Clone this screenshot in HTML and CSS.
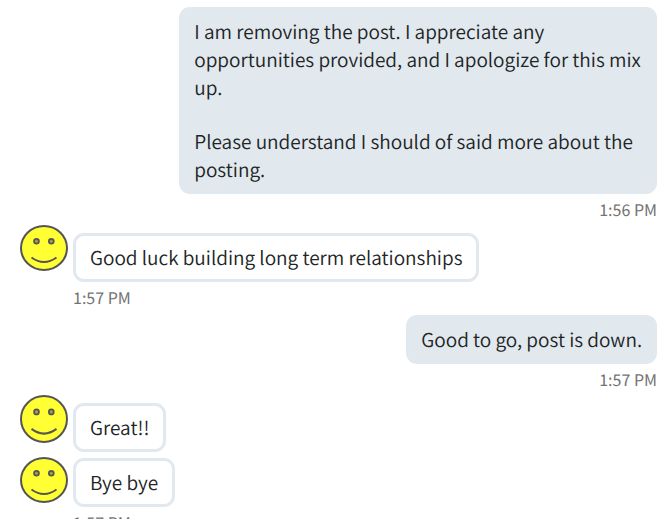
FILE: index.html
```html
<!DOCTYPE html>
<html lang="en">
<head>
    <meta charset="UTF-8">
    <meta name="viewport" content="width=device-width, initial-scale=1.0">
    <title>Messages</title>
    <link rel="stylesheet" href="styles.css">
</head>
<body>
    <svg class="sprite" aria-hidden="true">
        <symbol id="smiley" viewBox="0 0 48 46" preserveAspectRatio="none">
            <ellipse cx="24" cy="23" rx="23" ry="22" fill="#ffff33" stroke="#555" stroke-width="2"/>
            <circle cx="16.5" cy="16.2" r="2.4" fill="#a5a53c" stroke="#555" stroke-width="1.8"/>
            <circle cx="31.3" cy="16.2" r="2.4" fill="#a5a53c" stroke="#555" stroke-width="1.8"/>
            <path d="M11.5 32.5Q24 41.5 36.5 32.5" fill="none" stroke="#555" stroke-width="2"/>
        </symbol>
    </svg>

    <main class="chat">
        <div class="message sent">
            <div class="bubble">
                <p>I am removing the post. I appreciate any opportunities provided, and I apologize for this mix up.</p>
                <p>Please understand I should of said more about the posting.</p>
            </div>
        </div>
        <time class="time sent-time">1:56 PM</time>

        <div class="message received">
            <svg class="avatar" role="img" aria-label="Smiley"><use href="#smiley"/></svg>
            <p class="bubble">Good luck building long term relationships</p>
        </div>
        <time class="time received-time">1:57 PM</time>

        <div class="message sent">
            <p class="bubble">Good to go, post is down.</p>
        </div>
        <time class="time sent-time">1:57 PM</time>

        <div class="message received">
            <svg class="avatar tall" role="img" aria-label="Smiley"><use href="#smiley"/></svg>
            <p class="bubble">Great!!</p>
        </div>
        <div class="message received follow-up">
            <svg class="avatar" role="img" aria-label="Smiley"><use href="#smiley"/></svg>
            <p class="bubble">Bye bye</p>
        </div>
        <time class="time received-time">1:57 PM</time>
    </main>
</body>
</html>
```
FILE: styles.css
```css
* {
    box-sizing: border-box;
}
body {
    margin: 0;
    background-color: #fff;
    color: #202425;
    font-family: "Noto Sans CJK SC", "Open Sans", sans-serif;
    font-size: 19px;
    font-weight: 350;
    line-height: 28px;
    text-rendering: geometricPrecision;
}
p {
    margin: 0;
}
p + p {
    margin-top: 26px;
}
.sprite {
    display: block;
    width: 0;
    height: 0;
}
.chat {
    height: calc(100vh - 13px);
    padding: 7px 12px 0 20px;
    overflow: hidden;
}
.message {
    display: flex;
    align-items: flex-start;
}
.bubble {
    border-radius: 11px;
}
.sent {
    justify-content: flex-end;
}
.sent .bubble {
    max-width: 75%;
    padding: 11px 15px 10px;
    background-color: #e1e8ee;
}
.received {
    gap: 5px;
}
.received .bubble {
    margin-top: 8px;
    padding: 8px 14px 7px;
    border: 3px solid #e1e8ee;
}
.follow-up {
    margin-top: 5px;
}
.follow-up .bubble {
    margin-top: 1px;
}
.avatar {
    flex: none;
    width: 48px;
    height: 46px;
}
.avatar.tall {
    height: 48px;
}
.time {
    display: block;
    color: #737373;
    font-size: 16px;
    font-weight: 400;
}
.sent-time {
    line-height: 31px;
    text-align: right;
}
.received-time {
    padding-left: 53px;
    padding-bottom: 2px;
    line-height: 31px;
}
```
